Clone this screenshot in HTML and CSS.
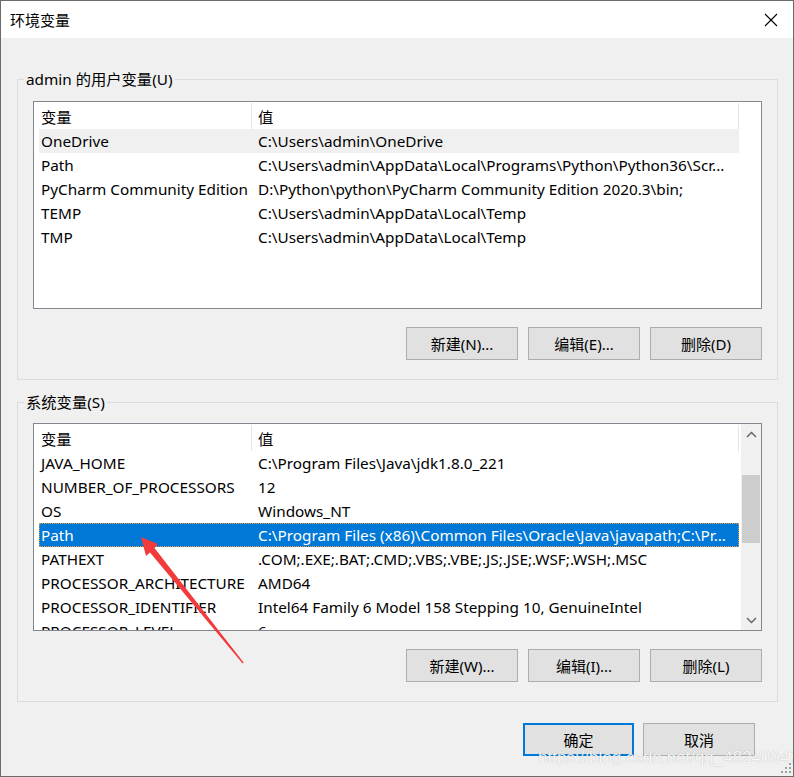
FILE: index.html
```html
<!DOCTYPE html>
<html lang="zh-CN">
<head>
<meta charset="utf-8">
<title>环境变量</title>
<link rel="stylesheet" href="styles.css">
</head>
<body>
<div class="window">
  <div class="titlebar">
    <span class="title">环境变量</span>
    <svg class="close" width="14" height="14" viewBox="0 0 14 14"><path d="M1 1 L13 13 M13 1 L1 13" stroke="#000" stroke-width="1.1" fill="none"/></svg>
  </div>
  <div class="body">
    <fieldset class="group group-user">
      <legend>admin 的用户变量(U)</legend>
      <div class="list">
        <div class="rows">
          <div class="row header"><div class="c1">变量</div><div class="c2">值</div></div>
          <div class="row hover"><div class="c1">OneDrive</div><div class="c2">C:\Users\admin\OneDrive</div></div>
          <div class="row"><div class="c1">Path</div><div class="c2">C:\Users\admin\AppData\Local\Programs\Python\Python36\Scr...</div></div>
          <div class="row"><div class="c1">PyCharm Community Edition</div><div class="c2">D:\Python\python\PyCharm Community Edition 2020.3\bin;</div></div>
          <div class="row"><div class="c1">TEMP</div><div class="c2">C:\Users\admin\AppData\Local\Temp</div></div>
          <div class="row"><div class="c1">TMP</div><div class="c2">C:\Users\admin\AppData\Local\Temp</div></div>
        </div>
      </div>
      <div class="buttons">
        <button class="btn">新建(N)...</button>
        <button class="btn">编辑(E)...</button>
        <button class="btn">删除(D)</button>
      </div>
    </fieldset>

    <fieldset class="group group-sys">
      <legend>系统变量(S)</legend>
      <div class="list">
        <div class="rows">
          <div class="row header"><div class="c1">变量</div><div class="c2">值</div></div>
          <div class="row"><div class="c1">JAVA_HOME</div><div class="c2">C:\Program Files\Java\jdk1.8.0_221</div></div>
          <div class="row"><div class="c1">NUMBER_OF_PROCESSORS</div><div class="c2">12</div></div>
          <div class="row"><div class="c1">OS</div><div class="c2">Windows_NT</div></div>
          <div class="row selected"><div class="c1">Path</div><div class="c2">C:\Program Files (x86)\Common Files\Oracle\Java\javapath;C:\Pr...</div></div>
          <div class="row"><div class="c1">PATHEXT</div><div class="c2">.COM;.EXE;.BAT;.CMD;.VBS;.VBE;.JS;.JSE;.WSF;.WSH;.MSC</div></div>
          <div class="row"><div class="c1">PROCESSOR_ARCHITECTURE</div><div class="c2">AMD64</div></div>
          <div class="row"><div class="c1">PROCESSOR_IDENTIFIER</div><div class="c2">Intel64 Family 6 Model 158 Stepping 10, GenuineIntel</div></div>
          <div class="row"><div class="c1">PROCESSOR_LEVEL</div><div class="c2">6</div></div>
        </div>
        <div class="scrollbar">
          <div class="sb-btn"><svg width="11" height="7" viewBox="0 0 11 7"><path d="M1 6 L5.5 1.5 L10 6" stroke="#606060" stroke-width="1.4" fill="none"/></svg></div>
          <div class="sb-track"><div class="sb-thumb"></div></div>
          <div class="sb-btn"><svg width="11" height="7" viewBox="0 0 11 7"><path d="M1 1 L5.5 5.5 L10 1" stroke="#606060" stroke-width="1.4" fill="none"/></svg></div>
        </div>
      </div>
      <div class="buttons">
        <button class="btn">新建(W)...</button>
        <button class="btn">编辑(I)...</button>
        <button class="btn">删除(L)</button>
      </div>
    </fieldset>

    <div class="footer">
      <button class="btn btn-default">确定</button>
      <button class="btn btn-cancel">取消</button>
    </div>
  </div>

  <div class="watermark">https://blog.csdn.net/qq_48240947</div>
  <svg class="grip" width="12" height="12" viewBox="0 0 12 12">
    <rect x="9" y="1" width="2" height="2" fill="#a0a0a0"/>
    <rect x="5" y="5" width="2" height="2" fill="#a0a0a0"/>
    <rect x="9" y="5" width="2" height="2" fill="#a0a0a0"/>
    <rect x="1" y="9" width="2" height="2" fill="#a0a0a0"/>
    <rect x="5" y="9" width="2" height="2" fill="#a0a0a0"/>
    <rect x="9" y="9" width="2" height="2" fill="#a0a0a0"/>
  </svg>
  <svg class="arrow" width="794" height="777" viewBox="0 0 794 777">
    <polygon points="141,537 158,544 154.5,548 243.6,662.6 242.6,663.4 150,552.5 146,556" fill="#f23b3b"/>
  </svg>
</div>
</body>
</html>
```

FILE: styles.css
```css
* { box-sizing: border-box; }
html, body { margin: 0; padding: 0; }
body {
  font-family: "Noto Sans", "Noto Sans CJK SC", sans-serif;
  font-size: 15.3px;
  color: #000;
  background: #f0f0f0;
}
.window {
  position: relative;
  width: 794px;
  height: 777px;
  border: 1px solid #6b6b6b;
  background: #f0f0f0;
  overflow: hidden;
}
.titlebar {
  height: 37px;
  background: #fff;
  display: flex;
  align-items: center;
  justify-content: space-between;
  padding: 0 15px 0 9px;
}
.title { font-size: 15px; }
.close { display: block; margin-top: 1px; }
.body {
  padding: 31px 15px 0 16px;
}
.group {
  margin: 0;
  border: 1px solid #dcdcdc;
  padding: 0 15px 19px 15px;
  min-width: 0;
}
.group legend {
  margin-left: -9px;
  padding: 0 2px;
  line-height: 20px;
  height: 20px;
}
.group-user .list { margin-top: 12px; }
.group-sys { margin-top: 12px; }
.group-sys .list { margin-top: 11px; }
.list {
  height: 208px;
  border: 1px solid #828790;
  background: #fff;
  display: flex;
  overflow: hidden;
}
.rows {
  flex: 1;
  padding-left: 5px;
  overflow: hidden;
}
.row {
  display: flex;
  width: 700px;
  height: 24px;
  align-items: center;
  white-space: nowrap;
}
.row .c1 {
  width: 212px;
  padding-left: 2px;
  overflow: hidden;
}
.row .c2 {
  flex: 1;
  padding-left: 7px;
  overflow: hidden;
}
.row.header {
  height: 27px;
  padding-top: 1px;
}
.row.header .c1 { height: 100%; display: flex; align-items: center; }
.row.header .c2 {
  height: 100%;
  display: flex;
  align-items: center;
  border-left: 1px solid #e5e5e5;
  border-right: 1px solid #e5e5e5;
  padding-left: 6px;
}
.row.hover { background: #f0f0f0; }
.row.selected {
  background: #0078d7;
  color: #fff;
  outline: 1px dotted #e89a3c;
  outline-offset: -1px;
}
.scrollbar {
  width: 20px;
  background: #f0f0f0;
  display: flex;
  flex-direction: column;
}
.sb-btn {
  height: 20px;
  display: flex;
  align-items: center;
  justify-content: center;
}
.sb-track { flex: 1; padding: 31px 1px 0 1px; }
.sb-thumb { height: 68px; background: #cdcdcd; }
.buttons {
  margin-top: 18px;
  display: flex;
  justify-content: flex-end;
  gap: 10px;
}
.btn {
  width: 112px;
  height: 33px;
  font-family: inherit;
  font-size: 15px;
  background: #e1e1e1;
  border: 1px solid #adadad;
  border-radius: 0;
  padding: 0;
  color: #000;
}
.footer {
  margin-top: 21px;
  display: flex;
  justify-content: flex-end;
  gap: 9px;
  padding-right: 23px;
}
.footer .btn { height: 33px; }
.footer .btn-default { width: 111px; }
.footer .btn-cancel { width: 112px; }
.btn-default { border: 2px solid #0078d7; }
.watermark {
  position: absolute;
  left: 537px;
  top: 747px;
  font-family: "Liberation Sans", sans-serif;
  font-size: 17px;
  color: rgba(255,255,255,0.92);
  text-shadow: 0 0 1px rgba(0,0,0,0.3);
  white-space: nowrap;
}
.grip { position: absolute; right: 1px; bottom: 2px; }
.arrow { position: absolute; left: -1px; top: -1px; pointer-events: none; }
```
